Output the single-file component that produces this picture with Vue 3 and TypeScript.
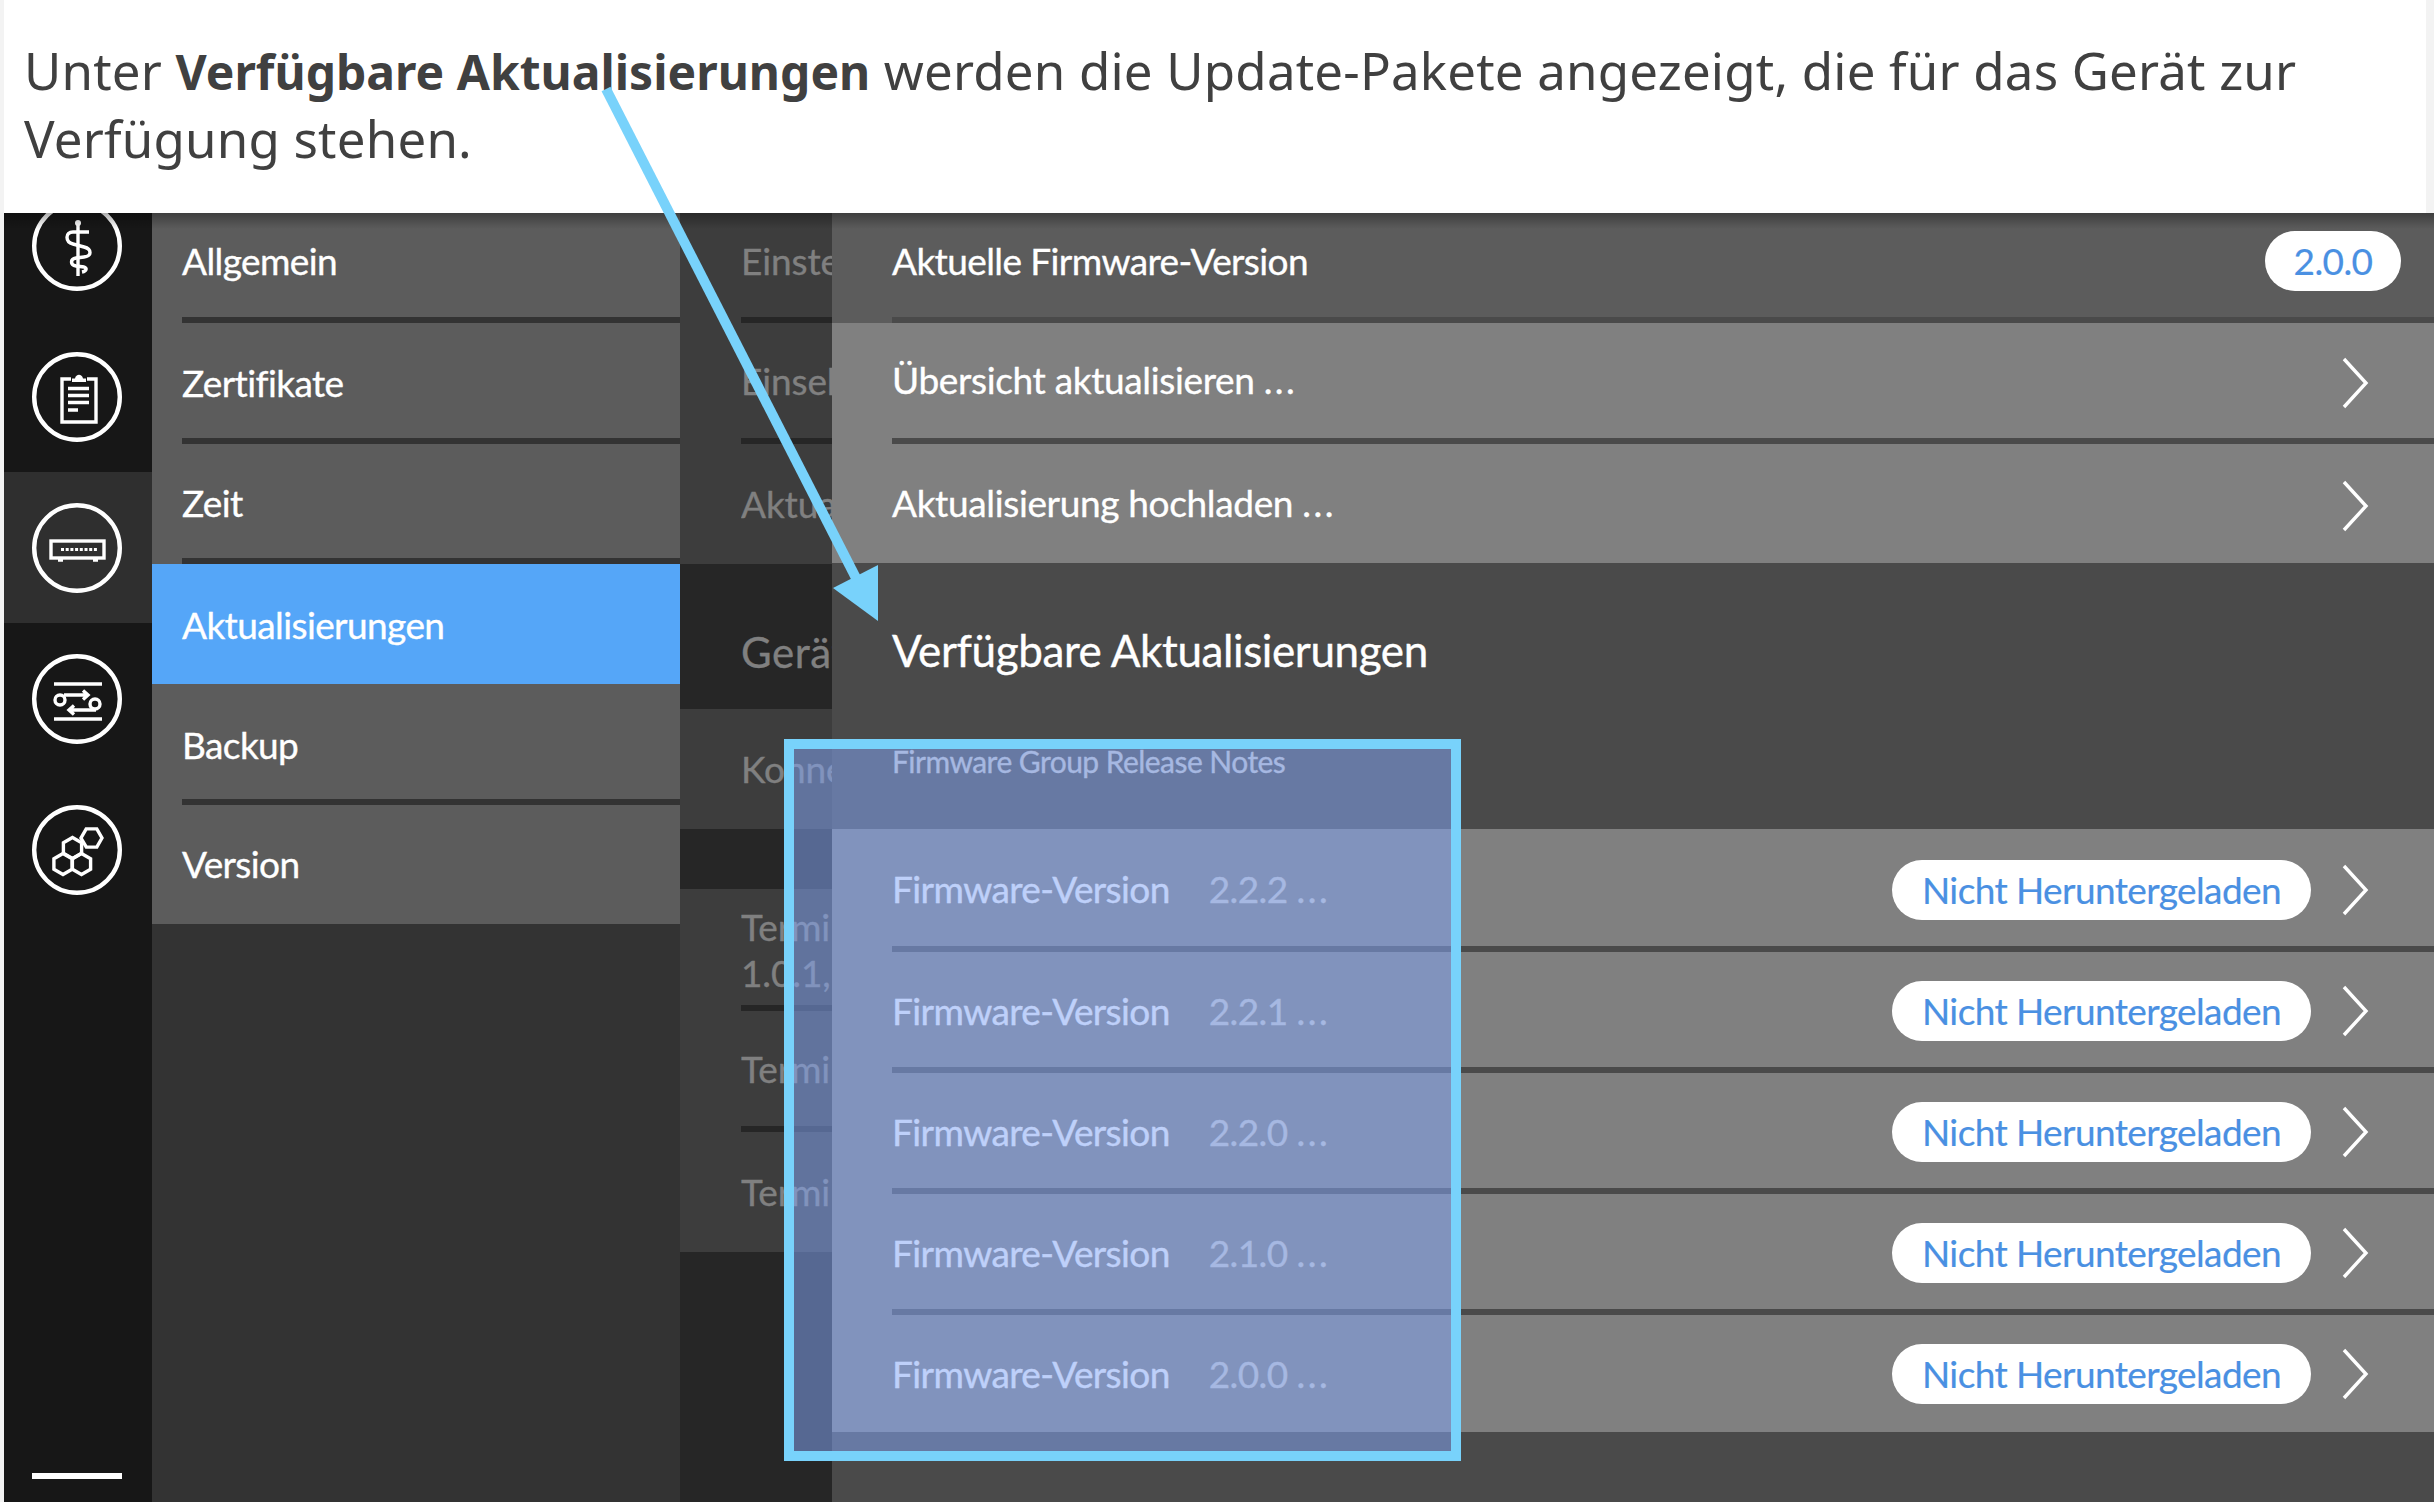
<script setup lang="ts">
interface MenuItem {
  label: string
  active?: boolean
}

type RailKind = 'health' | 'clipboard' | 'device' | 'sliders' | 'hex'

const railItems: RailKind[] = ['health', 'clipboard', 'device', 'sliders', 'hex']

const menu: MenuItem[] = [
  { label: 'Allgemein' },
  { label: 'Zertifikate' },
  { label: 'Zeit' },
  { label: 'Aktualisierungen', active: true },
  { label: 'Backup' },
  { label: 'Version' },
]

const firmware = ['2.2.2', '2.2.1', '2.2.0', '2.1.0', '2.0.0']
const deviceDots = [0, 1, 2, 3, 4, 5, 6, 7]

function hexPoints(cx: number, cy: number, r: number, rot = 30): string {
  const pts: string[] = []
  for (let i = 0; i < 6; i++) {
    const a = ((60 * i + rot) * Math.PI) / 180
    pts.push(`${(cx + r * Math.cos(a)).toFixed(1)},${(cy + r * Math.sin(a)).toFixed(1)}`)
  }
  return pts.join(' ')
}
</script>

<template>
  <div class="page">
    <header class="intro">
      <p>
        Unter <strong>Verfügbare Aktualisierungen</strong> werden die Update-Pakete angezeigt, die für das Gerät zur
        Verfügung stehen.
      </p>
    </header>

    <div class="device-ui">
      <nav class="rail">
        <div v-for="kind in railItems" :key="kind" class="rail-item" :class="{ selected: kind === 'device' }">
          <svg width="90" height="90" viewBox="0 0 90 90" fill="none" stroke="#fff" stroke-width="3.4">
            <circle cx="45" cy="45" r="42.8" stroke-width="4.4" />
            <g v-if="kind === 'health'">
              <path d="M46 20V75" />
              <circle cx="46" cy="22" r="3" fill="#fff" stroke="none" />
              <path d="M57 31H41C33 31 33 41 41 43L52 46C60 48 60 55 52 56L44 57C38 58 38 64 44 65L52 66C55 67 55 70 50 71" />
            </g>
            <g v-else-if="kind === 'clipboard'">
              <path d="M39 27H30V70H64V27H55" />
              <path d="M40 30V26.500H43C44 21.500 50 21.500 51 26.500H54V30Z" fill="#fff" stroke="none" />
              <path d="M36 36.500H57M36 43.500H57M36 50.500H57M36 58H46" />
            </g>
            <g v-else-if="kind === 'device'">
              <rect x="19" y="38" width="53" height="17" />
              <rect v-for="d in deviceDots" :key="d" :x="29 + d * 4.7" y="45" width="3" height="3" fill="#fff" stroke="none" />
              <path d="M26 57H31M61 57H66" />
            </g>
            <g v-else-if="kind === 'sliders'">
              <path d="M22 30H70M22 65H70" />
              <circle cx="28" cy="46" r="5" />
              <circle cx="63" cy="50" r="5" />
              <path d="M32 41H54M51 36.500L56 41L51 45.500" />
              <path d="M64 56H38M42 51.500L37 56L42 60.500" />
            </g>
            <g v-else>
              <polygon :points="hexPoints(59.500, 33, 10.500, 0)" />
              <polygon :points="hexPoints(40.500, 43, 10.500)" />
              <polygon :points="hexPoints(31, 59, 10.500)" />
              <polygon :points="hexPoints(49.500, 59, 10.500)" />
            </g>
          </svg>
        </div>
        <span class="rail-bar"></span>
      </nav>

      <aside class="menu">
        <div v-for="item in menu" :key="item.label" class="menu-row" :class="{ active: item.active }">
          <span class="menu-label">{{ item.label }}</span>
        </div>
      </aside>

      <section class="sub">
        <div class="sub-row first"><span>Einstellungen</span></div>
        <div class="sub-row"><span>Einselne</span></div>
        <div class="sub-row plain"><span>Aktualisierung</span></div>
        <div class="sub-title">Gerät</div>
        <div class="sub-row konn plain"><span>Konnektivität</span></div>
        <div class="sub-gap"></div>
        <div class="sub-row term"><span>Terminal<br />1.0.1, 1.0.0</span></div>
        <div class="sub-row"><span>Terminal</span></div>
        <div class="sub-row plain"><span>Terminal</span></div>
      </section>

      <main class="main">
        <div class="row head-row">
          <div class="row-inner">
            <span>Aktuelle Firmware-Version</span>
            <span class="pill version-pill">2.0.0</span>
          </div>
        </div>
        <div class="row action">
          <div class="row-inner">
            <span class="action-label">Übersicht aktualisieren <span class="dots">...</span></span>
            <svg class="chev" width="27" height="52" viewBox="0 0 27 52"><path d="M2 2L24 26L2 50" /></svg>
          </div>
        </div>
        <div class="row action last">
          <div class="row-inner">
            <span class="action-label">Aktualisierung hochladen <span class="dots">...</span></span>
            <svg class="chev" width="27" height="52" viewBox="0 0 27 52"><path d="M2 2L24 26L2 50" /></svg>
          </div>
        </div>

        <h2 class="group-title">Verfügbare Aktualisierungen</h2>
        <div class="group-note">Firmware Group Release Notes</div>

        <div v-for="fw in firmware" :key="fw" class="row fw-row">
          <div class="row-inner">
            <span class="fw-name">Firmware-Version</span>
            <span class="fw-num">{{ fw }} <span class="dots">...</span></span>
            <span class="pill dl-pill">Nicht Heruntergeladen</span>
            <svg class="chev" width="27" height="52" viewBox="0 0 27 52"><path d="M2 2L24 26L2 50" /></svg>
          </div>
        </div>
      </main>
    </div>

    <div class="top-shade"></div>
    <div class="highlight"></div>
    <svg class="arrow" width="2434" height="1502" viewBox="0 0 2434 1502">
      <path d="M606 89L856 578" stroke="#78d2fb" stroke-width="10" fill="none" />
      <polygon points="878,621 833,588 878,565" fill="#78d2fb" />
    </svg>
  </div>
</template>

<style scoped>
.page {
  position: relative;
  width: 2434px;
  height: 1502px;
  overflow: hidden;
  background: #f3f3f3;
  display: flex;
  flex-direction: column;
  font-family: Lato, 'Liberation Sans', sans-serif;
}

.intro {
  height: 213px;
  margin: 0 8px 0 4px;
  padding: 37px 0 0 20px;
  box-sizing: border-box;
  background: #fff;
  flex-shrink: 0;
}

.intro p {
  margin: 0;
  font-family: 'Noto Sans', sans-serif;
  font-size: 51px;
  line-height: 67px;
  letter-spacing: 0.2px;
  color: #404040;
}

.intro strong {
  font-size: 48px;
  letter-spacing: 0;
}

.device-ui {
  flex: 1;
  min-height: 0;
  margin-left: 4px;
  display: flex;
  color: #fff;
  font-size: 37px;
  letter-spacing: -0.6px;
  -webkit-text-stroke: 0.35px currentColor;
}

.dots {
  letter-spacing: 2.5px;
}

/* left icon strip */
.rail {
  width: 148px;
  flex-shrink: 0;
  background: #171717;
  display: flex;
  flex-direction: column;
  overflow: hidden;
}

.rail-item {
  height: 151px;
  flex-shrink: 0;
  padding-right: 2px;
  display: flex;
  align-items: center;
  justify-content: center;
}

.rail-item:first-child {
  margin-top: -43px;
}

.rail-item.selected {
  background: #2f2f2f;
}

.rail-bar {
  width: 90px;
  height: 6px;
  margin: auto 0 23px 28px;
  background: #fff;
}

/* settings menu */
.menu {
  width: 528px;
  flex-shrink: 0;
  background: #333;
}

.menu-row {
  height: 121px;
  padding-left: 30px;
  background: #5c5c5c;
  display: flex;
}

.menu-row:nth-child(1) {
  height: 110px;
}

.menu-row:nth-child(3),
.menu-row:nth-child(4) {
  height: 120px;
}

.menu-row:nth-child(6) {
  height: 119px;
}

.menu-label {
  flex: 1;
  display: flex;
  align-items: center;
  padding-top: 3px;
  border-bottom: 6px solid #333;
}

.menu-row:nth-child(1) .menu-label {
  padding-top: 0;
  padding-bottom: 10px;
}

.menu-row:nth-child(5) .menu-label {
  padding-top: 6px;
}

.menu-row:last-child .menu-label {
  padding-top: 0;
  padding-bottom: 3px;
  border-bottom: 0;
}

.menu-row.active {
  background: #55a6f8;
}

.menu-row.active .menu-label {
  border-bottom: 3px solid #55a6f8;
}

/* second level, mostly hidden behind the main panel */
.sub {
  width: 152px;
  flex-shrink: 0;
  background: #262626;
  overflow: hidden;
  color: #808080;
  white-space: nowrap;
  letter-spacing: -0.1px;
}

.sub-row {
  height: 121px;
  padding-left: 61px;
  background: #3d3d3d;
  display: flex;
}

.sub-row.first {
  height: 110px;
}

.sub-row.first span {
  padding-bottom: 8px;
}

.sub-row.konn {
  height: 121px;
}

.sub-row.term {
  height: 122px;
}

.sub-row.term span {
  padding-top: 5px;
}

.sub-row.plain {
  height: 120px;
}

.sub-row span {
  flex: 1;
  display: flex;
  flex-wrap: wrap;
  align-content: center;
  border-bottom: 6px solid #262626;
  line-height: 46px;
  overflow: hidden;
}

.sub-row.plain span {
  border-bottom: 0;
}

.sub-title {
  height: 145px;
  padding: 63px 0 0 61px;
  box-sizing: border-box;
  font-size: 42px;
  letter-spacing: 0.6px;
}

.sub-gap {
  height: 60px;
}

/* main panel */
.main {
  flex: 1;
  min-width: 0;
  background: #4a4a4a;
}

.row {
  height: 121px;
  padding-left: 60px;
  background: #808080;
  display: flex;
}

.head-row {
  height: 110px;
  background: #5c5c5c;
}

.action.last {
  height: 119px;
}

.row-inner {
  flex: 1;
  display: flex;
  align-items: center;
  padding-top: 4px;
  padding-right: 65px;
  border-bottom: 6px solid #4a4a4a;
}

.head-row .row-inner {
  padding-top: 0;
  padding-bottom: 9px;
  padding-right: 33px;
  justify-content: space-between;
}

.action .row-inner {
  justify-content: space-between;
}

.action-label {
  margin-top: -6px;
  letter-spacing: -0.35px;
}

.fw-row .row-inner {
  padding-top: 2px;
}

.fw-row:nth-child(6) .row-inner {
  padding-top: 4px;
}

.fw-row:nth-child(6) .fw-name,
.fw-row:nth-child(6) .fw-num {
  margin-top: -2px;
}

.action.last .row-inner,
.fw-row:last-child .row-inner {
  border-bottom: 0;
}

.fw-row:last-child .row-inner {
  padding-top: 0;
}

.chev {
  flex-shrink: 0;
}

.chev path {
  fill: none;
  stroke: #fff;
  stroke-width: 3.4;
}

.pill {
  height: 60px;
  border-radius: 30px;
  background: #fff;
  color: #4a90e2;
  -webkit-text-stroke: 0.2px currentColor;
  display: flex;
  align-items: center;
  justify-content: center;
  flex-shrink: 0;
}

.version-pill {
  width: 136px;
}

.dl-pill {
  width: 419px;
  margin-left: auto;
  margin-right: 31px;
}

.group-title {
  margin: 0;
  height: 178px;
  padding: 61px 0 0 60px;
  box-sizing: border-box;
  font-size: 44px;
  font-weight: 400;
  line-height: 52px;
  letter-spacing: -0.4px;
}

.group-note {
  height: 88px;
  padding: 0 0 0 60px;
  box-sizing: border-box;
  font-size: 30px;
  line-height: 40px;
  color: #ccc;
  letter-spacing: -0.55px;
}

.fw-row:nth-of-type(n) {
  height: 121px;
}

.fw-row:nth-child(6) {
  height: 123px;
}

.fw-row:last-child {
  height: 117px;
}

.fw-num {
  margin-left: 39px;
  color: #ccc;
}

/* annotation layers */
.top-shade {
  position: absolute;
  top: 213px;
  left: 4px;
  right: 0;
  height: 16px;
  background: linear-gradient(rgba(0, 0, 0, 0.32), rgba(0, 0, 0, 0));
}

.highlight {
  position: absolute;
  left: 784px;
  top: 739px;
  width: 677px;
  height: 722px;
  box-sizing: border-box;
  border: 10px solid #78d2fb;
  background: rgba(130, 165, 245, 0.52);
}

.arrow {
  position: absolute;
  top: 0;
  left: 0;
}
</style>
